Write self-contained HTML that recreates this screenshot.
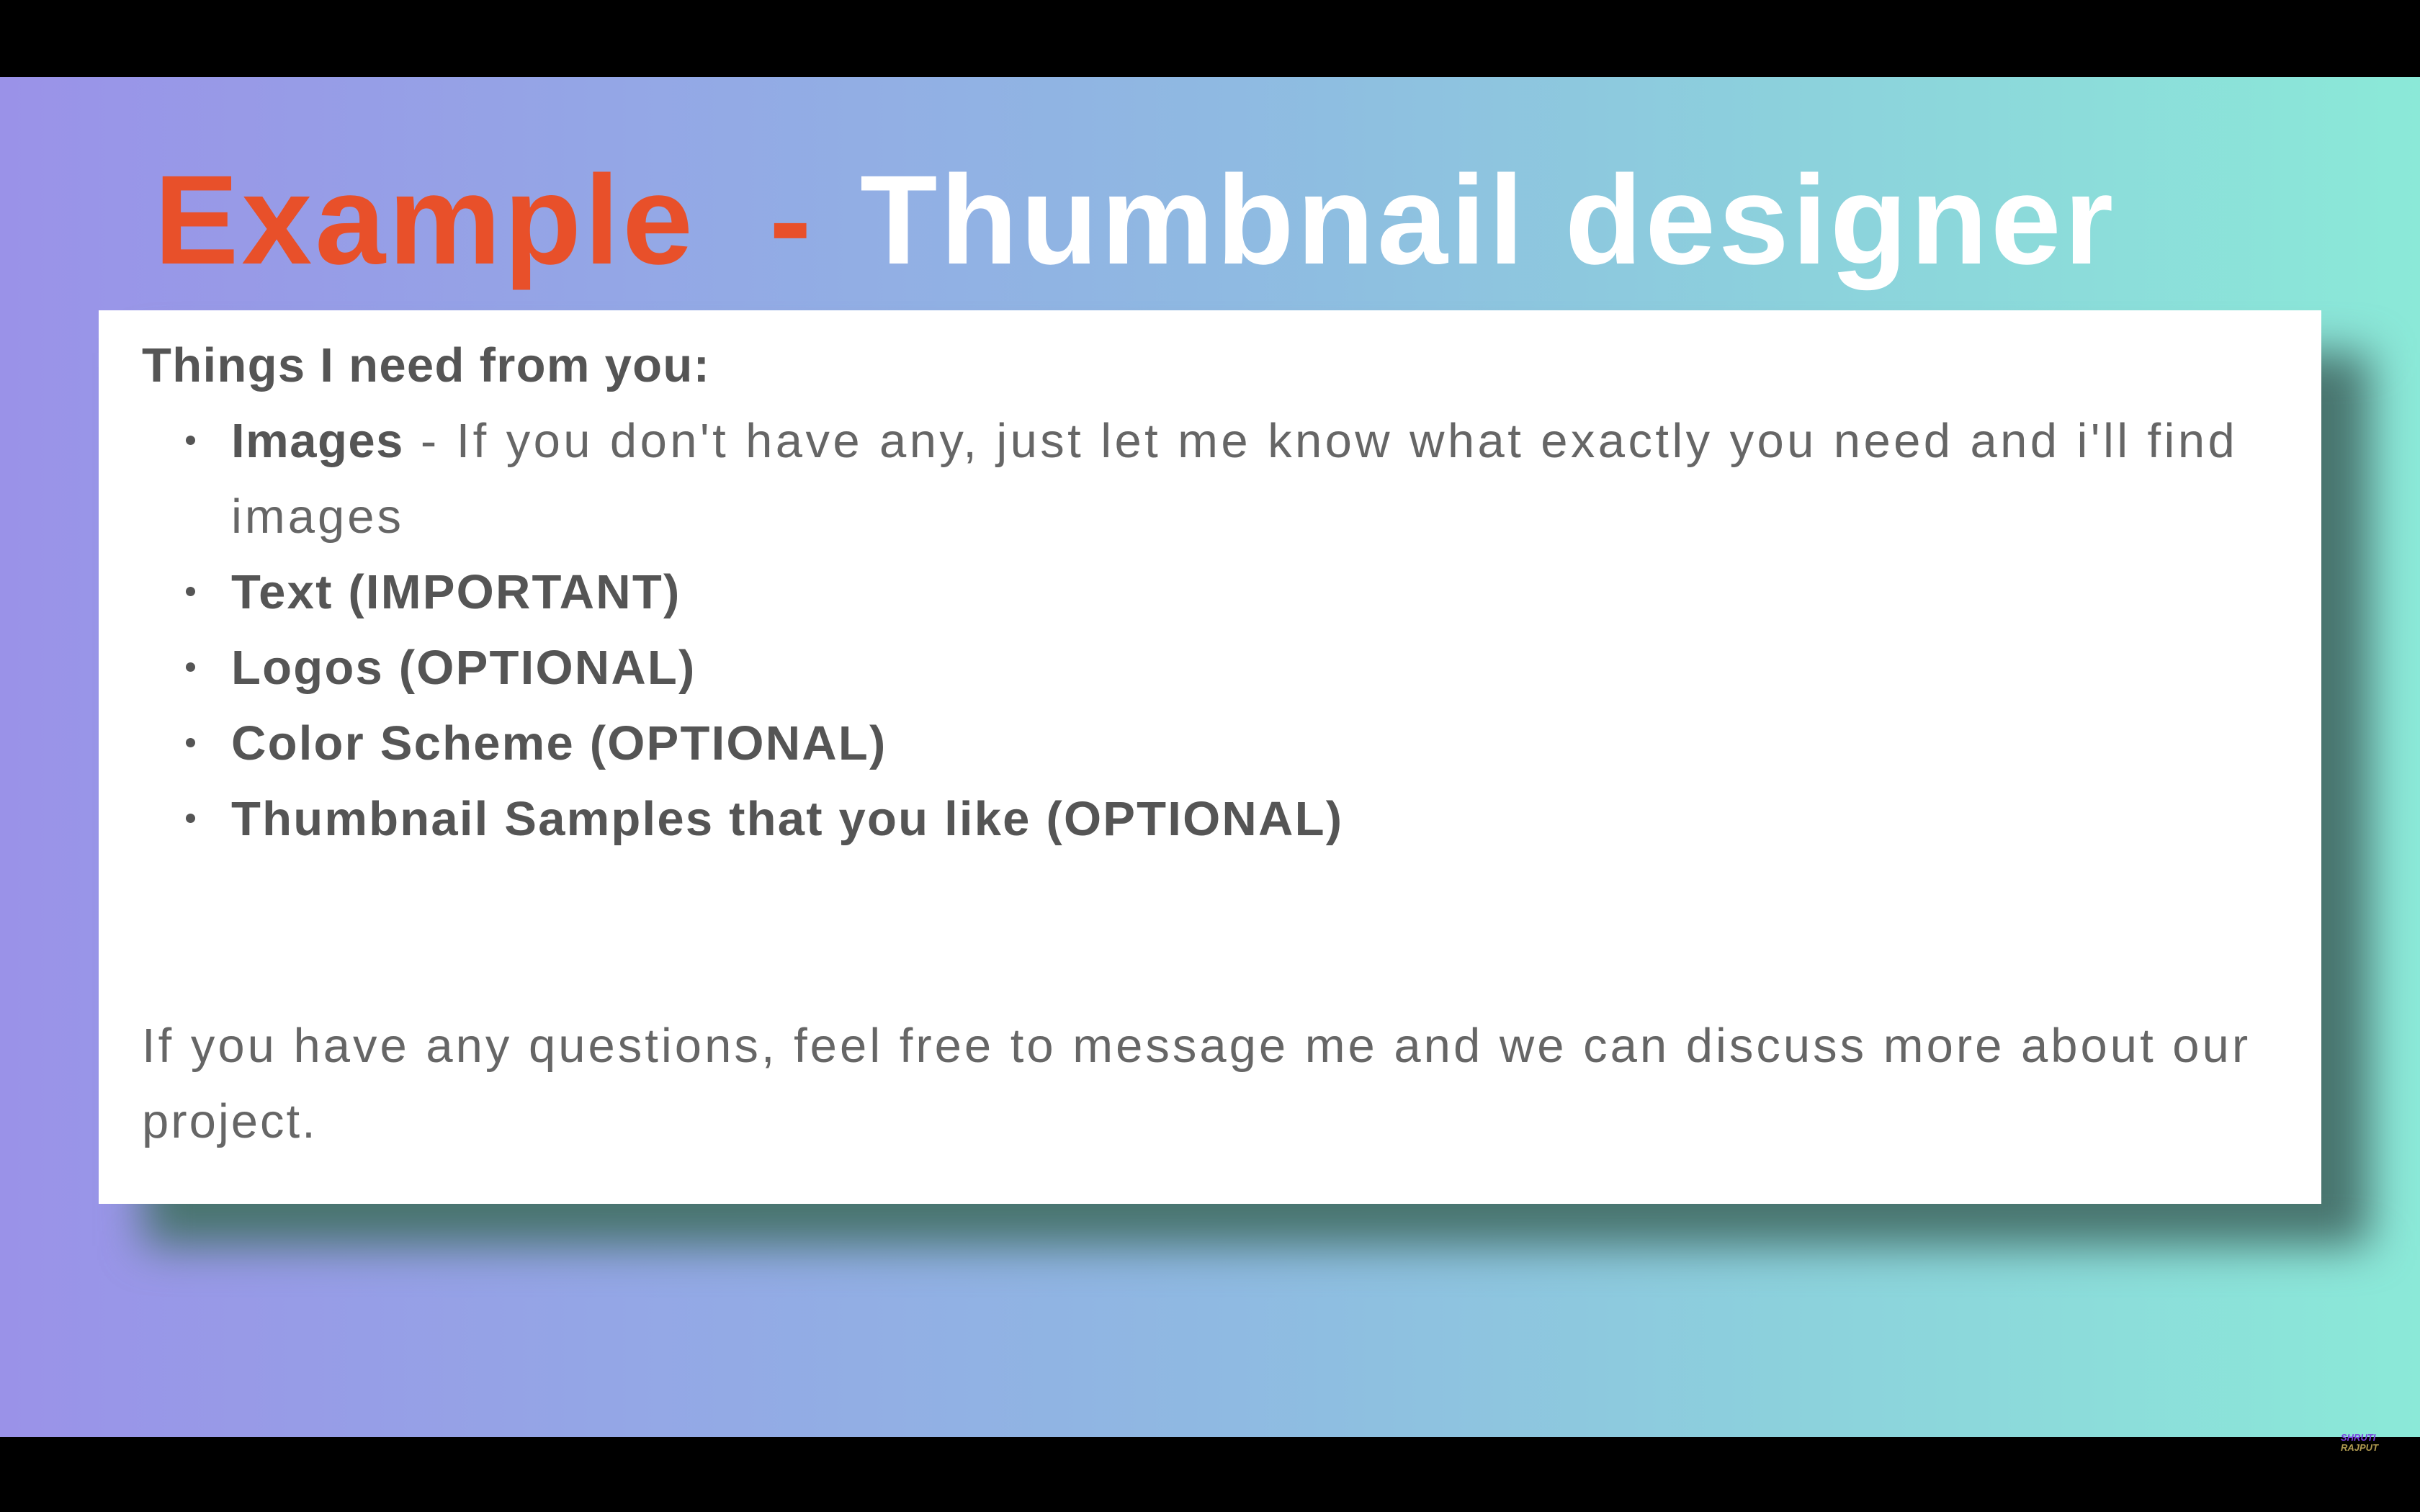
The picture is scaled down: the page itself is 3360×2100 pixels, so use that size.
<!DOCTYPE html>
<html><head><meta charset="utf-8"><style>
html,body{margin:0;padding:0;}
body{width:3360px;height:2100px;position:relative;overflow:hidden;background:#000;font-family:"Liberation Sans",sans-serif;}
#bg{position:absolute;left:0;top:107px;width:3360px;height:1889px;background:linear-gradient(90deg,#9a92e8 0%,#94a6e6 25%,#8fb9e2 50%,#8cd2dc 75%,#8be9d8 100%);}
#shadow{position:absolute;left:200px;top:490px;width:3090px;height:1240px;background:#48746e;filter:blur(30px);}
#card{position:absolute;left:137px;top:431px;width:3086px;height:1241px;background:#fff;}
.t{position:absolute;white-space:nowrap;font-weight:bold;font-size:176px;line-height:1;}
.l{position:absolute;white-space:nowrap;font-size:67px;line-height:1;color:#555;}
.b{font-weight:bold;}
.r{color:#666;font-weight:normal;}
.dot{position:absolute;width:13px;height:13px;border-radius:50%;background:#555;left:258px;}
</style></head><body>
<div id="bg"></div>
<div class="t" style="left:214px;top:218px;color:#e8502a;letter-spacing:4px;">Example</div>
<div class="t" style="left:1068px;top:218px;color:#e8502a;">-</div>
<div class="t" style="left:1194px;top:218px;color:#fff;letter-spacing:4px;">Thumbnail designer</div>
<div id="shadow"></div>
<div id="card"></div>
<div class="l b" style="left:197px;top:474px;letter-spacing:1.3px;">Things I need from you:</div>
<div class="dot" style="top:605px"></div>
<div class="l" style="left:321px;top:579px;"><span class="b" style="letter-spacing:1.5px">Images</span><span class="r" style="letter-spacing:4.4px"> - If you don't have any, just let me know what exactly you need and i'll find</span></div>
<div class="l r" style="left:321px;top:684px;letter-spacing:4px;">images</div>
<div class="dot" style="top:815px"></div>
<div class="l b" style="left:321px;top:789px;letter-spacing:2.2px;">Text (IMPORTANT)</div>
<div class="dot" style="top:920px"></div>
<div class="l b" style="left:321px;top:894px;letter-spacing:2.2px;">Logos (OPTIONAL)</div>
<div class="dot" style="top:1025px"></div>
<div class="l b" style="left:321px;top:999px;letter-spacing:2.2px;">Color Scheme (OPTIONAL)</div>
<div class="dot" style="top:1130px"></div>
<div class="l b" style="left:321px;top:1104px;letter-spacing:2.2px;">Thumbnail Samples that you like (OPTIONAL)</div>
<div class="l r" style="left:197px;top:1419px;letter-spacing:4px;">If you have any questions, feel free to message me and we can discuss more about our</div>
<div class="l r" style="left:197px;top:1524px;letter-spacing:3px;">project.</div>
<div style="position:absolute;left:3250px;top:1990px;font:italic bold 13px 'Liberation Sans',sans-serif;line-height:14px;">
<div style="color:#7a3ee0">SHRUTI</div><div style="color:#b09a50">RAJPUT</div></div>
</body></html>
